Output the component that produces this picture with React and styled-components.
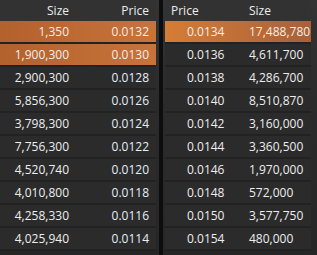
import React from 'react';
import styled, { createGlobalStyle } from 'styled-components';

const GlobalStyle = createGlobalStyle`
  html, body { margin: 0; padding: 0; background: #141414; }
  body { font-family: "Open Sans", "Liberation Sans", sans-serif; }
`;

const bids = [
  ['1,350', '0.0132', true],
  ['1,900,300', '0.0130', true],
  ['2,900,300', '0.0128'],
  ['5,856,300', '0.0126'],
  ['3,798,300', '0.0124'],
  ['7,756,300', '0.0122'],
  ['4,520,740', '0.0120'],
  ['4,010,800', '0.0118'],
  ['4,258,330', '0.0116'],
  ['4,025,940', '0.0114'],
];

const asks = [
  ['0.0134', '17,488,780', true],
  ['0.0136', '4,611,700'],
  ['0.0138', '4,286,700'],
  ['0.0140', '8,510,870'],
  ['0.0142', '3,160,000'],
  ['0.0144', '3,360,500'],
  ['0.0146', '1,970,000'],
  ['0.0148', '572,000'],
  ['0.0150', '3,577,750'],
  ['0.0154', '480,000'],
];

const Book = styled.div`
  display: flex;
  width: 317px;
  height: 255px;
  overflow: hidden;
  gap: 4px;
  background: #0d0d0d;
`;

const Panel = styled.div`
  flex: ${p => (p.$side === 'left' ? '0 0 156px' : '1')};
  display: flex;
  flex-direction: column;
  background: linear-gradient(180deg, #343434 0%, #2b2b2b 40%, #262626 100%);
  padding: ${p => (p.$side === 'left' ? '0 3px 0 0' : '0 6px 0 2px')};
`;

const Header = styled.div`
  height: 21px;
  display: grid;
  grid-template-columns: ${p => p.$cols};
  align-items: center;
  color: #ececec;
  font-size: 12px;
  background: #323232;
`;

const Row = styled.div`
  height: 21px;
  margin-bottom: 2px;
  display: grid;
  grid-template-columns: ${p => p.$cols};
  align-items: center;
  font-size: 12px;
  color: #eeeeee;
  background: ${p =>
    p.$hot
      ? p.$side === 'left'
        ? 'linear-gradient(90deg, #b3612d 0%, #c8733a 100%)'
        : 'linear-gradient(90deg, #d67d36 0%, #a8603a 100%)'
      : '#2b2b2b'};
  box-shadow: 0 2px 0 #222222;
`;

const Cell = styled.span`
  text-align: ${p => p.$align || 'left'};
  padding-left: ${p => p.$pl || 0}px;
  white-space: nowrap;
`;

const Price = styled(Cell)`
  color: ${p => (p.$tint ? '#e4eef8' : '#eeeeee')};
`;

export default function App() {
  const leftCols = '69px 80px';
  const rightCols = '84px 1fr';
  return (
    <>
      <GlobalStyle />
      <Book>
        <Panel $side="left">
          <Header $cols={leftCols}>
            <Cell $align="right">Size</Cell>
            <Cell $align="right">Price</Cell>
          </Header>
          {bids.map(([size, price, hot]) => (
            <Row key={price} $cols={leftCols} $hot={hot} $side="left">
              <Cell $align="right">{size}</Cell>
              <Price $align="right" $tint={!hot}>{price}</Price>
            </Row>
          ))}
        </Panel>
        <Panel $side="right">
          <Header $cols={rightCols}>
            <Cell $pl={6}>Price</Cell>
            <Cell>Size</Cell>
          </Header>
          {asks.map(([price, size, hot]) => (
            <Row key={price} $cols={rightCols} $hot={hot} $side="right">
              <Price $pl={22}>{price}</Price>
              <Cell>{size}</Cell>
            </Row>
          ))}
        </Panel>
      </Book>
    </>
  );
}
